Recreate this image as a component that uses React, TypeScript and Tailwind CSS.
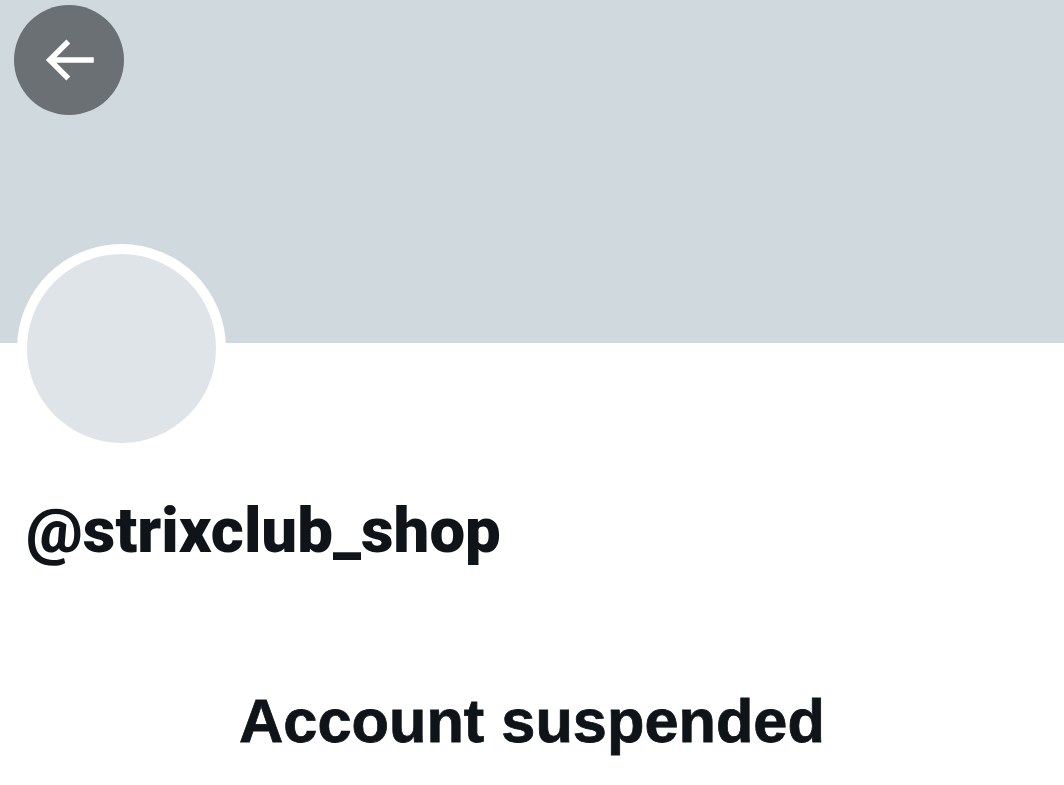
export default function App() {
  return (
    <div className="w-[1064px] h-[785px] bg-white overflow-hidden" style={{ fontFamily: "Roboto, 'Liberation Sans', sans-serif" }}>
      <div className="h-[343px] bg-[#cfd9de] pt-[5px] pl-[14px]">
        <div className="w-[110px] h-[110px] rounded-full bg-[#6b7074] flex items-center justify-center">
          <svg viewBox="0 0 24 24" className="w-[66px] h-[66px]" fill="#ffffff">
            <path d="M7.414 13l5.043 5.04-1.414 1.42L3.586 12l7.457-7.46 1.414 1.42L7.414 11H21v2H7.414z" />
          </svg>
        </div>
      </div>
      <div className="pl-[17px] -mt-[99px]">
        <div className="w-[209px] h-[209px] rounded-full bg-white p-[10px]">
          <div className="w-full h-full rounded-full bg-[#dfe4e8]" />
        </div>
      </div>
      <div className="pl-[26px] mt-[38px] text-[#0f1419] font-black text-[63.5px] leading-[80px]">
        @strixclub_shop
      </div>
      <div className="mt-[110px] text-center text-[#0f1419] font-bold text-[61.3px] leading-[80px] [-webkit-text-stroke:0.8px_#0f1419]" style={{ fontFamily: "'Liberation Sans', Arial, sans-serif" }}>
        Account suspended
      </div>
    </div>
  );
}
